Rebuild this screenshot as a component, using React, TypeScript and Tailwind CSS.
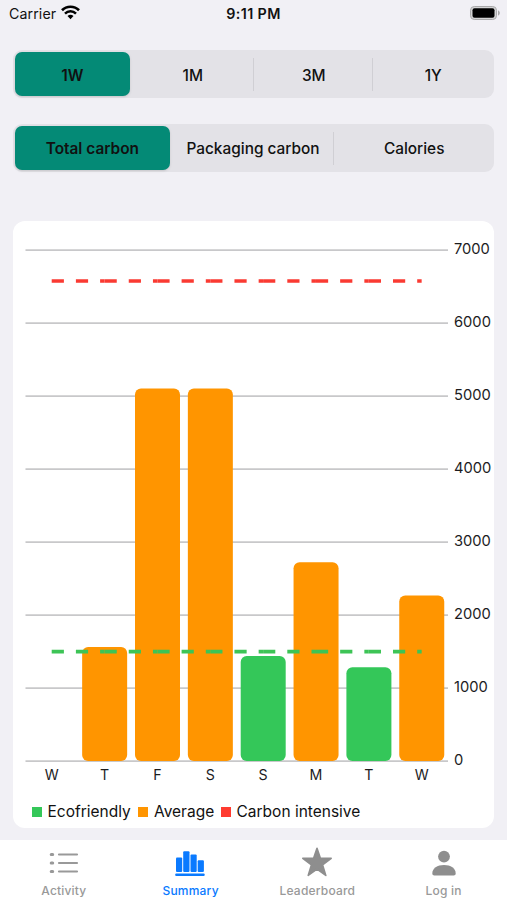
import clsx from 'clsx';

type Level = 'eco' | 'average';

interface Bar {
  day: string;
  top: number;
  level: Level;
}

const BASELINE = 540;
const FIRST_X = 38.7;
const STEP = 52.85;

const bars: Bar[] = [
  { day: 'W', top: BASELINE, level: 'average' },
  { day: 'T', top: 426, level: 'average' },
  { day: 'F', top: 167.5, level: 'average' },
  { day: 'S', top: 167.5, level: 'average' },
  { day: 'S', top: 435, level: 'eco' },
  { day: 'M', top: 341.3, level: 'average' },
  { day: 'T', top: 446.2, level: 'eco' },
  { day: 'W', top: 374.5, level: 'average' },
];

const ticks = [7000, 6000, 5000, 4000, 3000, 2000, 1000, 0];

const legend = [
  { label: 'Ecofriendly', color: 'bg-[#34c759]', width: 'w-[83px]' },
  { label: 'Average', color: 'bg-[#ff9500]', width: 'w-[59px]' },
  { label: 'Carbon intensive', color: 'bg-[#ff3b30]', width: 'w-[130px]' },
];

function StatusBar() {
  return (
    <header className="grid h-7 grid-cols-3 items-center pr-1.5 pl-[9px]">
      <div className="flex items-center gap-[5px] text-[14.2px] tracking-[0.1px]">
        <span>Carrier</span>
        <svg className="-mt-0.5" width="19" height="15" viewBox="0 0 19 15" fill="none" stroke="#000">
          <path d="M1 5.3a12 12 0 0 1 17 0" strokeWidth="2.7" />
          <path d="M4 8.6a7.8 7.8 0 0 1 11 0" strokeWidth="2.5" />
          <path d="M9.5 14.2 6.5 11.1a4.3 4.3 0 0 1 6 0Z" fill="#000" stroke="none" />
        </svg>
      </div>
      <span className="-ml-[3px] text-center text-[14.3px] font-semibold tracking-[0.4px]">9:11 PM</span>
      <svg className="-mt-0.5 justify-self-end" width="32" height="16" viewBox="0 0 32 16">
        <rect x="1.5" y="1.5" width="26" height="13" rx="3.8" fill="#d4d4d5" stroke="#a9a9aa" />
        <rect x="3.5" y="3.2" width="22" height="9.6" rx="2" fill="#000" />
        <path d="M29 5.5c2.4.6 2.4 4.4 0 5Z" fill="#a9a9aa" />
      </svg>
    </header>
  );
}

interface SegmentedProps {
  items: { label: string; width: string }[];
  // indexes of the items that have a hairline on their left
  dividers: number[];
}

function Segmented({ items, dividers }: SegmentedProps) {
  return (
    <div className="flex h-12 rounded-[9px] bg-[#e3e2e7] p-[2px] text-[15.4px] font-medium">
      {items.map((item, i) => (
        <button
          key={item.label}
          className={clsx(
            'relative flex items-center justify-center rounded-[7px] pt-[3px] whitespace-nowrap',
            item.width,
            i === 0 ? 'bg-[#048a76] font-semibold shadow-sm' : 'pl-[3px]'
          )}
        >
          {dividers.includes(i) && (
            <span className="absolute top-[6px] left-0 h-[33px] w-px bg-[#d0cfd4]" />
          )}
          {item.label}
        </button>
      ))}
    </div>
  );
}

// The dash pattern starts again at every data point
function LimitLine({ y, color }: { y: number; color: string }) {
  return (
    <g stroke={color} strokeWidth="3.6" strokeDasharray="12.2 12">
      {bars.slice(1).map((_, i) => (
        <path key={i} d={`M${FIRST_X + i * STEP} ${y}h${STEP}`} />
      ))}
    </g>
  );
}

function Chart() {
  return (
    <svg width="482" height="570" viewBox="0 0 482 570" className="block">
      {ticks.map((tick, i) => (
        <g key={tick}>
          <path d={`M12.5 ${29.2 + i * 73}h422.5`} stroke="#c8c8ca" strokeWidth="1.7" />
          <text x="441" y={33.4 + i * 72.95} fontSize="14.7" fill="#1c1c1e">
            {tick}
          </text>
        </g>
      ))}
      {bars.map((bar, i) => (
        <g key={i}>
          {bar.top < BASELINE && (
            <rect
              x={FIRST_X + i * STEP - 22.4}
              y={bar.top}
              width="45"
              height={BASELINE - bar.top}
              rx="6"
              fill={bar.level === 'eco' ? '#34c759' : '#ff9500'}
            />
          )}
          <text x={FIRST_X + i * STEP} y="559" textAnchor="middle" fontSize="14.2" fill="#1c1c1e">
            {bar.day}
          </text>
        </g>
      ))}
      <LimitLine y={60} color="#fa3a32" />
      <LimitLine y={430.6} color="#3dc456" />
    </svg>
  );
}

function Legend() {
  return (
    <div className="mt-[11px] ml-[18.5px] flex h-5 items-center gap-[7.5px]">
      {legend.map((item) => (
        <div key={item.label} className="flex items-center gap-1.5">
          <span className={clsx('size-2.5', item.color)} />
          <span className={clsx('text-[15.5px] whitespace-nowrap', item.width)}>{item.label}</span>
        </div>
      ))}
    </div>
  );
}

function TabBar() {
  return (
    <nav className="grid h-[60px] grid-cols-4 bg-white text-[12px] font-medium tracking-[0.2px] text-[#999]">
      <div className="flex flex-col items-center">
        <svg className="mt-1 ml-0.5" width="32" height="36" viewBox="0 0 32 36" stroke="#999" strokeLinecap="round">
          <path d="M3.2 10.5h1.5M3.2 19h1.5M3.2 27.5h1.5" strokeWidth="3" />
          <path d="M11 10.5h18M11 19h18M11 27.5h18" strokeWidth="2.2" />
        </svg>
        <span className="mt-0.5 ml-px">Activity</span>
      </div>
      <div className="flex flex-col items-center text-[#0a7aff]">
        <svg className="mt-1" width="32" height="36" viewBox="0 0 32 36" fill="#0a7aff">
          <rect x="2" y="13.5" width="6.2" height="14.5" rx="1" />
          <rect x="9.2" y="7.3" width="6.3" height="20.7" rx="1" />
          <rect x="16.5" y="10.5" width="6.2" height="17.5" rx="1" />
          <rect x="23.7" y="16.3" width="6.2" height="11.7" rx="1" />
          <rect x="1.2" y="29.5" width="29.5" height="2.5" rx="1" />
        </svg>
        <span className="mt-0.5 ml-px">Summary</span>
      </div>
      <div className="flex flex-col items-center">
        <svg className="mt-1" width="32" height="36" viewBox="0 0 32 36" fill="#8e8e8e" stroke="#8e8e8e" strokeLinejoin="round">
          <path
            d="m16 4.3 3.4 10h10.8l-8.6 6.6 3.2 10.5L16 25.2l-8.8 6.2 3.2-10.5-8.6-6.6h10.8Z"
            strokeWidth="1.6"
          />
        </svg>
        <span className="mt-0.5 ml-px">Leaderboard</span>
      </div>
      <div className="flex flex-col items-center">
        <svg className="mt-1" width="32" height="36" viewBox="0 0 32 36" fill="#8e8e8e">
          <circle cx="16" cy="12.6" r="5.9" />
          <path d="M4.3 29.4c0-5 5-8.4 11.7-8.4s11.7 3.4 11.7 8.4c0 1.2-.8 2-2 2H6.3c-1.2 0-2-.8-2-2Z" />
        </svg>
        <span className="mt-0.5">Log in</span>
      </div>
    </nav>
  );
}

export default function App() {
  return (
    <div className="flex h-[900px] w-[507px] flex-col overflow-hidden bg-[#f1f0f5] font-['Inter',sans-serif] text-[#111]">
      <StatusBar />
      <main className="flex flex-1 flex-col px-[13px] pt-[22px]">
        <Segmented
          items={[
            { label: '1W', width: 'w-[115px]' },
            { label: '1M', width: 'w-[124px]' },
            { label: '3M', width: 'w-[119px]' },
            { label: '1Y', width: 'w-[121px]' },
          ]}
          dividers={[2, 3]}
        />
        <div className="mt-[25.5px]">
          <Segmented
            items={[
              { label: 'Total carbon', width: 'w-[155px]' },
              { label: 'Packaging carbon', width: 'w-[164px]' },
              { label: 'Calories', width: 'w-[159px]' },
            ]}
            dividers={[2]}
          />
        </div>
        <section className="mt-[49px] h-[607px] rounded-xl bg-white">
          <Chart />
          <Legend />
        </section>
      </main>
      <TabBar />
    </div>
  );
}
